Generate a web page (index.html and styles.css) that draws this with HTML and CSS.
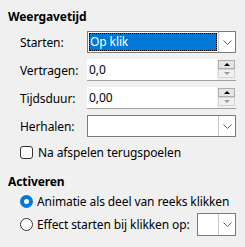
FILE: index.html
```html
<!DOCTYPE html>
<html lang="nl">
<head>
    <meta charset="UTF-8">
    <title>Weergavetijd</title>
    <link rel="stylesheet" href="styles.css">
</head>
<body>
    <div class="panel">
        <h3 class="section-title">Weergavetijd</h3>
        <div class="form-grid">
            <label>Starten:</label>
            <div class="combo">
                <div class="combo-value selected"><span>Op klik</span></div>
                <div class="combo-btn">
                    <svg width="9" height="5" viewBox="0 0 9 5"><path d="M0.5 0.5 L4.5 4.5 L8.5 0.5" fill="none" stroke="#606060" stroke-width="1"/></svg>
                </div>
            </div>

            <label>Vertragen:</label>
            <div class="spin">
                <div class="spin-value">0,0</div>
                <div class="spin-btns">
                    <div class="spin-up"><span class="tri-up"></span></div>
                    <div class="spin-down"><span class="tri-down"></span></div>
                </div>
            </div>

            <label>Tijdsduur:</label>
            <div class="spin">
                <div class="spin-value">0,00</div>
                <div class="spin-btns">
                    <div class="spin-up"><span class="tri-up"></span></div>
                    <div class="spin-down"><span class="tri-down"></span></div>
                </div>
            </div>

            <label>Herhalen:</label>
            <div class="combo">
                <div class="combo-value"></div>
                <div class="combo-btn">
                    <svg width="9" height="5" viewBox="0 0 9 5"><path d="M0.5 0.5 L4.5 4.5 L8.5 0.5" fill="none" stroke="#606060" stroke-width="1"/></svg>
                </div>
            </div>
        </div>

        <div class="check-row">
            <span class="checkbox"></span>
            <span>Na afspelen terugspoelen</span>
        </div>

        <h3 class="section-title second">Activeren</h3>
        <div class="radio-row">
            <span class="radio checked"></span>
            <span>Animatie als deel van reeks klikken</span>
        </div>
        <div class="radio-row">
            <span class="radio"></span>
            <span>Effect starten bij klikken op:</span>
            <div class="combo small">
                <div class="combo-value"></div>
                <div class="combo-btn">
                    <svg width="9" height="5" viewBox="0 0 9 5"><path d="M0.5 0.5 L4.5 4.5 L8.5 0.5" fill="none" stroke="#606060" stroke-width="1"/></svg>
                </div>
            </div>
        </div>
    </div>
</body>
</html>
```

FILE: styles.css
```css
body {
    margin: 0;
    background: #f0f0f0;
    font-family: 'Noto Sans', sans-serif;
    font-size: 12px;
    letter-spacing: -0.1px;
    color: #000;
}

.panel {
    width: 245px;
    height: 247px;
    padding: 9px 0 0 8px;
    box-sizing: border-box;
}

.section-title {
    margin: 0;
    font-size: 12px;
    font-weight: bold;
    line-height: 16px;
}

.section-title.second {
    margin-top: 14px;
}

.form-grid {
    display: grid;
    grid-template-columns: 67px 149px;
    grid-auto-rows: 22px;
    row-gap: 6px;
    margin: 6px 0 0 12px;
    align-items: center;
}

.combo {
    display: flex;
    height: 22px;
    border: 1px solid #7a7a7a;
    box-sizing: border-box;
    background: #fff;
}

.combo-value {
    flex: 1;
    padding: 1px;
}

.combo-value.selected span {
    display: block;
    height: 18px;
    line-height: 17px;
    padding-left: 1px;
    background: #0078d7;
    color: #fff;
    outline: 1px dotted #000;
    outline-offset: -1px;
}

.combo-btn {
    width: 16px;
    border-left: 1px solid #c8c8c8;
    display: flex;
    align-items: center;
    justify-content: center;
}

.spin {
    display: flex;
    height: 22px;
}

.spin-value {
    flex: 1;
    background: #fff;
    border-bottom: 1px solid #a0a0a0;
    line-height: 21px;
    padding-left: 2px;
}

.spin-btns {
    width: 17px;
    padding: 1px 1px 2px 1px;
    display: flex;
    flex-direction: column;
    border-bottom: 1px solid #a0a0a0;
    background: #f0f0f0;
}

.spin-up,
.spin-down {
    flex: 1;
    border: 1px solid #d4d4d4;
    display: flex;
    align-items: center;
    justify-content: center;
    background: #f0f0f0;
}

.spin-up {
    border-color: #adadad;
    background: #e5e5e5;
}

.tri-up {
    border-left: 3px solid transparent;
    border-right: 3px solid transparent;
    border-bottom: 3px solid #000;
}

.tri-down {
    border-left: 3px solid transparent;
    border-right: 3px solid transparent;
    border-top: 3px solid #9a9a9a;
}

.check-row {
    display: flex;
    align-items: center;
    gap: 5px;
    margin: 7px 0 0 12px;
    height: 16px;
}

.checkbox {
    width: 11px;
    height: 11px;
    border: 1px solid #333;
    border-radius: 3px;
    background: #fff;
}

.radio-row {
    display: flex;
    align-items: center;
    gap: 4px;
    margin-left: 12px;
    width: 216px;
    height: 23px;
}

.radio {
    width: 11px;
    height: 11px;
    border: 1px solid #333;
    border-radius: 50%;
    background: #fff;
}

.radio.checked {
    border: 4px solid #0078d7;
    width: 5px;
    height: 5px;
}

.combo.small {
    width: 39px;
    height: 23px;
    margin-left: auto;
}
```
